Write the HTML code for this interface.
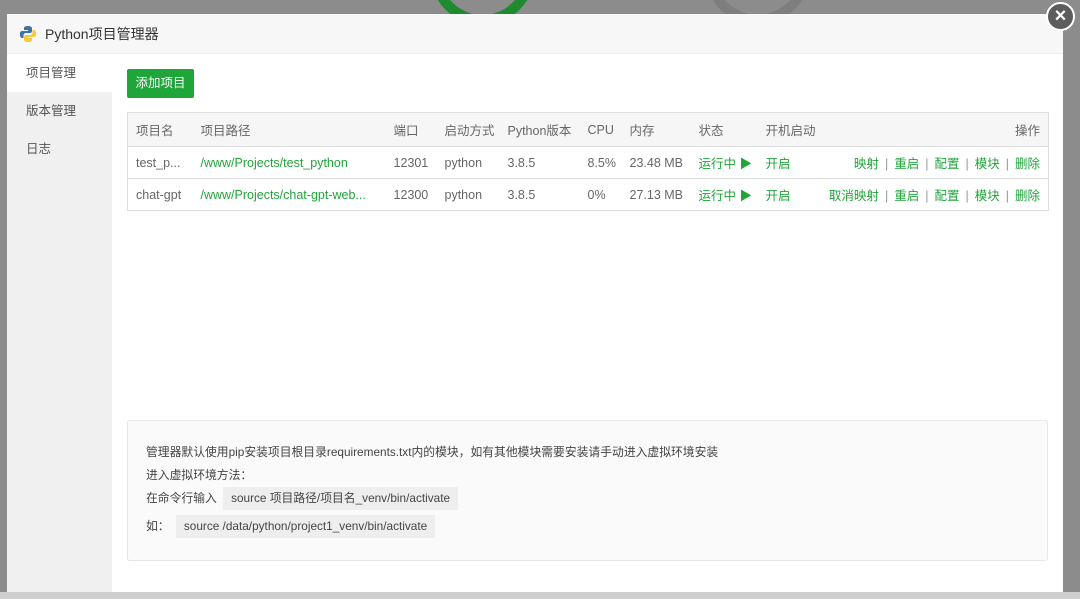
<!DOCTYPE html>
<html><head><meta charset="utf-8"><style>
*{margin:0;padding:0;box-sizing:border-box}
body{width:1080px;height:599px;overflow:hidden;background:#8c8c8c;font-family:"Liberation Sans","Noto Sans CJK SC",sans-serif;font-size:12.5px;color:#666;position:relative}
.bgc{position:absolute;border:10px solid #7e7e7e;border-radius:50%}
.modal{position:absolute;left:7px;top:14px;width:1056px;height:578px;background:#fff}
.hd{height:40px;background:#f7f7f7;border-bottom:1px solid #eee;display:flex;align-items:center;padding-left:12px;font-size:14px;color:#333}
.side{position:absolute;left:0;top:40px;width:105px;bottom:0;background:#f0f0f0}
.side div{height:38px;line-height:38px;padding-left:19px;color:#555;font-size:12.5px}
.side .on{background:#fff}
.btn{position:absolute;left:120px;top:55px;width:67px;height:29px;background:#20a53a;color:#fff;border-radius:2px;text-align:center;line-height:29px;font-size:12.5px}
table{position:absolute;left:120px;top:98px;width:921px;border-collapse:collapse;border:1px solid #ddd;table-layout:fixed}
th{background:#f6f6f6;font-weight:normal;text-align:left;height:34px;color:#666;border-bottom:1px solid #ddd;padding-left:8px;white-space:nowrap}
td{height:32px;padding-left:8px;border-bottom:1px solid #ddd;color:#666;white-space:nowrap;overflow:hidden}
.g{color:#20a53a}
.r{text-align:right;padding-right:8px}
.sep{color:#999;margin:0 6px}
.note{position:absolute;left:120px;top:406px;width:921px;height:141px;background:#fafafa;border:1px solid #e8e8e8;border-radius:3px;padding:20px 0 0 18px;font-size:11.8px;color:#444;line-height:23px}
.code{display:inline-block;background:#eee;padding:0 8px;line-height:23px;margin-left:3px}
.x{position:absolute;left:1046px;top:2px;width:29px;height:29px;border-radius:50%;background:#5d5d5d;border:2px solid #fff;color:#fff;text-align:center;line-height:24px;font-size:20px;font-weight:bold}
</style></head><body>
<div class="bgc" style="left:430px;top:-80px;width:105px;height:105px;border-color:#1f8a30"></div>
<div class="bgc" style="left:705px;top:-80px;width:105px;height:105px"></div>
<div style="position:absolute;left:0;top:592px;width:1080px;height:7px;background:#cfcfcf"></div>
<div class="modal">
<div class="hd"><svg width="18" height="18" viewBox="0 0 18 18" style="margin-right:8px"><path d="M9 1C5 1 5 2.5 5 3.5V5h4v1H3C1 6 1 8 1 9.5S1.5 13 3 13h1.5v-2.5c0-1.5 1-2.5 2.5-2.5h4c1.3 0 2-.8 2-2V3.5C13 2 11.5 1 9 1z" fill="#3873a6"/><path d="M9 17c4 0 4-1.5 4-2.5V13H9v-1h6c2 0 2-2 2-3.5S16.5 5 15 5h-1.5v2.5c0 1.5-1 2.5-2.5 2.5H7c-1.3 0-2 .8-2 2v2.5C5 16 6.5 17 9 17z" fill="#f7c93e"/></svg>Python项目管理器</div>
<div class="side"><div class="on">项目管理</div><div>版本管理</div><div>日志</div></div>
<div class="btn">添加项目</div>
<table>
<colgroup><col style="width:65px"><col style="width:193px"><col style="width:51px"><col style="width:63px"><col style="width:80px"><col style="width:42px"><col style="width:69px"><col style="width:67px"><col style="width:60px"><col style="width:231px"></colgroup>
<tr><th>项目名</th><th>项目路径</th><th>端口</th><th>启动方式</th><th>Python版本</th><th>CPU</th><th>内存</th><th>状态</th><th>开机启动</th><th class="r" style="text-align:right">操作</th></tr>
<tr><td>test_p...</td><td class="g">/www/Projects/test_python</td><td>12301</td><td>python</td><td>3.8.5</td><td>8.5%</td><td>23.48 MB</td><td class="g">运行中 ▶</td><td class="g">开启</td><td class="r g">映射<span class="sep">|</span>重启<span class="sep">|</span>配置<span class="sep">|</span>模块<span class="sep">|</span>删除</td></tr>
<tr><td>chat-gpt</td><td class="g">/www/Projects/chat-gpt-web...</td><td>12300</td><td>python</td><td>3.8.5</td><td>0%</td><td>27.13 MB</td><td class="g">运行中 ▶</td><td class="g">开启</td><td class="r g">取消映射<span class="sep">|</span>重启<span class="sep">|</span>配置<span class="sep">|</span>模块<span class="sep">|</span>删除</td></tr>
</table>
<div class="note">管理器默认使用pip安装项目根目录requirements.txt内的模块，如有其他模块需要安装请手动进入虚拟环境安装<br>进入虚拟环境方法：<br>在命令行输入 <span class="code">source 项目路径/项目名_venv/bin/activate</span><div style="height:5px"></div>如： <span class="code">source /data/python/project1_venv/bin/activate</span></div>
</div>
<div class="x">×</div>
</body></html>
